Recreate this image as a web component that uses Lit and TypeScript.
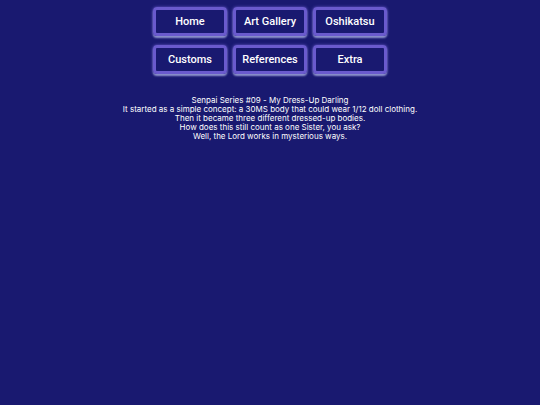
import { LitElement, html, css } from "lit";
import { customElement } from "lit/decorators.js";

const links = ["Home", "Art Gallery", "Oshikatsu", "Customs", "References", "Extra"];

const title = "Senpai Series #09 - My Dress-Up Darling";

const lines = [
  "It started as a simple concept: a 30MS body that could wear 1/12 doll clothing.",
  "Then it became three different dressed-up bodies.",
  "How does this still count as one Sister, you ask?",
  "Well, the Lord works in mysterious ways.",
];

@customElement("app-root")
export class AppRoot extends LitElement {
  static styles = css`
    :host {
      display: block;
      box-sizing: border-box;
      min-height: 100vh;
      padding: 7px 8px;
      background: #191970;
      color: #fff;
    }
    .nav {
      display: grid;
      grid-template-columns: repeat(3, 74px);
      justify-content: center;
      gap: 9px 6px;
      font-family: Roboto, "Liberation Sans", sans-serif;
    }
    .link {
      box-sizing: border-box;
      padding: 4px 0;
      border: 3px solid #6a5acd;
      border-radius: 4px;
      box-shadow: 0 2px 2px #8c92cc, 0 0 3px #6a5acd;
      color: #fff;
      font-size: 11px;
      font-weight: 500;
      line-height: 15px;
      text-align: center;
      text-decoration: none;
      white-space: nowrap;
    }
    .intro {
      margin-top: 22px;
      font-family: Inter, "Liberation Sans", sans-serif;
      font-size: 8px;
      line-height: 9px;
      text-align: center;
    }
    .title {
      margin: 0;
      font-size: inherit;
      font-weight: 400;
    }
    .line {
      margin: 0;
    }
  `;

  render() {
    return html`
      <nav class="nav">
        ${links.map((label) => html`<a class="link" href="#">${label}</a>`)}
      </nav>
      <main class="intro">
        <h1 class="title">${title}</h1>
        ${lines.map((line) => html`<p class="line">${line}</p>`)}
      </main>
    `;
  }
}
